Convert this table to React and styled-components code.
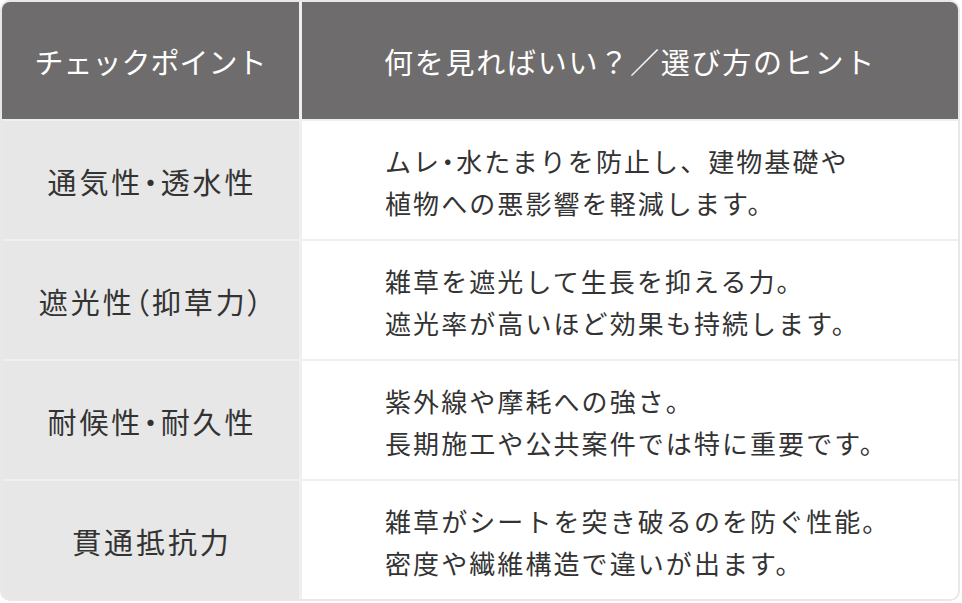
import React from 'react';
import styled, { createGlobalStyle } from 'styled-components';

const GlobalStyle = createGlobalStyle`
  html, body {
    margin: 0;
    padding: 0;
    background: #ffffff;
  }
  body {
    font-family: "Noto Sans CJK JP", "Noto Sans", sans-serif;
    color: #333333;
  }
`;

const Table = styled.div`
  box-sizing: border-box;
  width: 960px;
  display: grid;
  grid-template-columns: 297px 1fr;
  grid-template-rows: 117px repeat(4, 118px);
  column-gap: 3px;
  row-gap: 2px;
  background: #efefef;
  border: 2px solid #e8e8e8;
  border-radius: 10px;
  overflow: hidden;
`;

const HeaderCell = styled.div`
  background: #6e6c6c;
  color: #ffffff;
  display: flex;
  align-items: center;
  justify-content: center;
  font-size: 29px;
  letter-spacing: ${p => p.$spacing || '0.06em'};
  font-weight: 400;
`;

const LabelCell = styled.div`
  background: #e7e7e7;
  display: flex;
  align-items: center;
  justify-content: center;
  font-size: 29px;
  font-feature-settings: "palt";
  letter-spacing: 0.1em;
  color: #333333;
  padding-top: 2px;
  padding-left: 0.1em;
`;

const HintCell = styled.div`
  background: #ffffff;
  display: flex;
  align-items: center;
  padding-left: 83px;
  padding-top: 4px;
  box-sizing: border-box;
`;

const HintText = styled.p`
  margin: 0;
  font-size: 26px;
  line-height: 42px;
  letter-spacing: 0.08em;
  color: #333333;
`;

const Dot = styled.span`
  font-feature-settings: "palt";
`;

const rows = [
  {
    label: '通気性・透水性',
    lines: ['ムレ・水たまりを防止し、建物基礎や', '植物への悪影響を軽減します。'],
  },
  {
    label: '遮光性（抑草力）',
    lines: ['雑草を遮光して生長を抑える力。', '遮光率が高いほど効果も持続します。'],
  },
  {
    label: '耐候性・耐久性',
    lines: ['紫外線や摩耗への強さ。', '長期施工や公共案件では特に重要です。'],
  },
  {
    label: '貫通抵抗力',
    lines: ['雑草がシートを突き破るのを防ぐ性能。', '密度や繊維構造で違いが出ます。'],
  },
];

// the middle dot sits tighter than the other full-width glyphs
function withDots(line) {
  return line.split('・').map((part, i) => (
    <React.Fragment key={i}>
      {i > 0 && <Dot>・</Dot>}
      {part}
    </React.Fragment>
  ));
}

export default function App() {
  return (
    <>
      <GlobalStyle />
      <Table>
        <HeaderCell $spacing="0">チェックポイント</HeaderCell>
        <HeaderCell>何を見ればいい？／選び方のヒント</HeaderCell>
        {rows.map(row => (
          <React.Fragment key={row.label}>
            <LabelCell>{row.label}</LabelCell>
            <HintCell>
              <HintText>
                {row.lines.map((line, i) => (
                  <React.Fragment key={i}>
                    {withDots(line)}
                    {i < row.lines.length - 1 && <br />}
                  </React.Fragment>
                ))}
              </HintText>
            </HintCell>
          </React.Fragment>
        ))}
      </Table>
    </>
  );
}
